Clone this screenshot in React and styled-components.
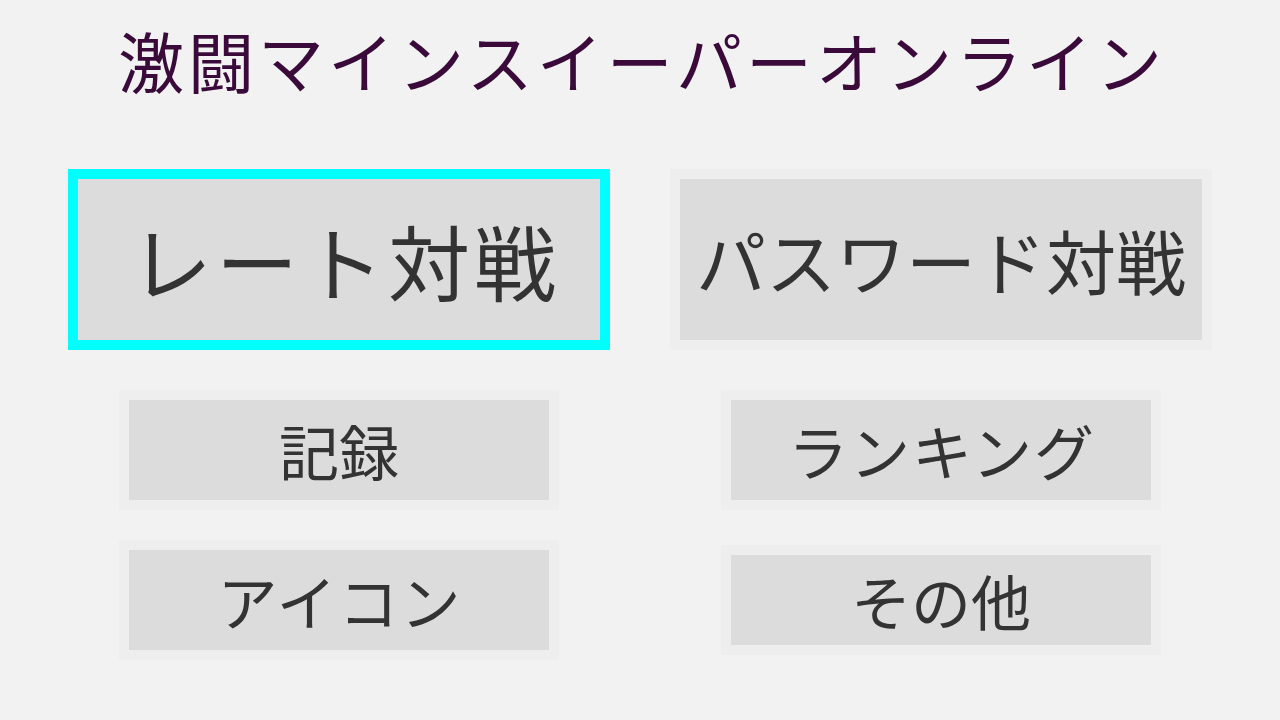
import React from "react";
import styled, { createGlobalStyle } from "styled-components";

const GlobalStyle = createGlobalStyle`
  html, body {
    margin: 0;
    padding: 0;
    background: #f2f2f2;
  }
  body {
    font-family: "Noto Sans CJK JP", "Noto Sans", sans-serif;
  }
`;

const Page = styled.div`
  width: 1280px;
  height: 720px;
  display: flex;
  flex-direction: column;
  align-items: center;
  overflow: hidden;
`;

const Title = styled.h1`
  margin: 0;
  height: 169px;
  display: flex;
  align-items: flex-start;
  justify-content: center;
  padding-top: 22px;
  box-sizing: border-box;
  font-size: 66px;
  font-weight: 400;
  line-height: 1.15;
  letter-spacing: 4px;
  text-indent: 4px;
  color: #3a0a3a;
`;

const Menu = styled.div`
  display: grid;
  grid-template-columns: 542px 542px;
  column-gap: 60px;
  align-items: center;
  justify-items: center;
  margin-top: ${(p) => p.offset || 0}px;
`;

const Rows = styled.div`
  display: flex;
  flex-direction: column;
  gap: 30px;
`;

const BigFrame = styled.button`
  width: 542px;
  height: 181px;
  padding: 0;
  margin: 0;
  box-sizing: border-box;
  border: 10px solid ${(p) => (p.focused ? "#00ffff" : "#eeeeee")};
  background: #dcdcdc;
  display: flex;
  align-items: center;
  justify-content: center;
  font-family: "Noto Sans CJK JP", sans-serif;
  font-size: ${(p) => p.size}px;
  letter-spacing: ${(p) => p.spacing}px;
  text-indent: ${(p) => p.indent || 0}px;
  color: #333333;
  line-height: 1;
  cursor: pointer;
`;

const SmallFrame = styled.button`
  width: 440px;
  height: ${(p) => p.h || 120}px;
  padding: 0;
  margin: 0;
  box-sizing: border-box;
  border: 10px solid #eeeeee;
  background: #dcdcdc;
  display: flex;
  align-items: center;
  justify-content: center;
  font-family: "Noto Sans CJK JP", sans-serif;
  font-size: 60px;
  letter-spacing: ${(p) => p.spacing || 0}px;
  text-indent: ${(p) => p.spacing || 0}px;
  color: #333333;
  line-height: 1;
  cursor: pointer;
`;

export default function App() {
  return (
    <>
      <GlobalStyle />
      <Page>
        <Title>激闘マインスイーパーオンライン</Title>
        <Rows>
          <Menu>
            <BigFrame focused size={82} spacing={4} indent={12}>
              レート対戦
            </BigFrame>
            <BigFrame size={70} spacing={0}>
              パスワード対戦
            </BigFrame>
          </Menu>
          <Menu offset={10}>
            <SmallFrame>記録</SmallFrame>
            <SmallFrame spacing={2}>ランキング</SmallFrame>
          </Menu>
          <Menu>
            <SmallFrame spacing={2}>アイコン</SmallFrame>
            <SmallFrame h={110}>その他</SmallFrame>
          </Menu>
        </Rows>
      </Page>
    </>
  );
}
